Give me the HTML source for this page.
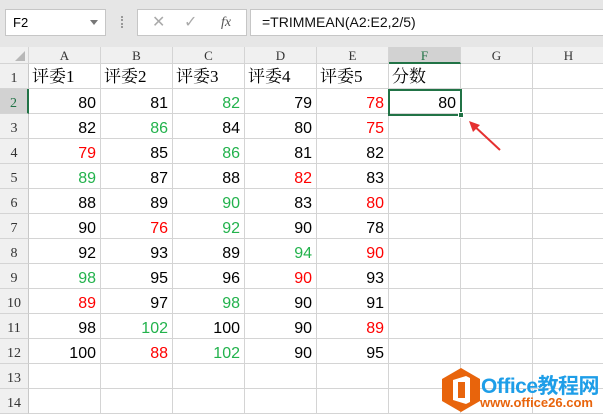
<!DOCTYPE html>
<html><head><meta charset="utf-8"><style>
*{box-sizing:border-box;margin:0;padding:0}
body{width:603px;height:416px;overflow:hidden;background:#fff;font-family:"Liberation Sans",sans-serif;position:relative}
.tb{position:absolute;left:0;top:0;width:603px;height:47px;background:#e6e6e6}
.box{position:absolute;top:9px;height:27px;background:#fff;border:1px solid #c6c6c6}
.hdr{position:absolute;left:0;top:47px;width:603px;height:17px;background:#f0f0f0;border-bottom:1px solid #d4d4d4}
.ch{position:absolute;top:47px;height:17px;border-right:1px solid #d4d4d4;font:13px "Liberation Serif",serif;text-align:center;line-height:17px;color:#333}
.row{position:absolute;left:0;width:610px;height:25px;display:flex}
.rh{width:29px;height:25px;flex:none;background:#f0f0f0;border-bottom:1px solid #d4d4d4;border-right:1px solid #c8c8c8;font:14px "Liberation Serif",serif;text-align:center;line-height:30px;color:#333}
.row span{width:72px;flex:none;height:25px;border-right:1px solid #d4d4d4;border-bottom:1px solid #d4d4d4;font-size:16px;text-align:right;padding-right:4px;line-height:30px;color:#000}
.t span{text-align:left;padding-left:3px;font-family:"Liberation Serif","Noto Serif CJK SC",serif;font-size:17px;line-height:25px}
.row span.g{color:#22b24c}.row span.r{color:#ff0000}
.sel{background:#d2d2d2!important;color:#217346!important;border-right:2px solid #217346!important}
</style></head><body>
<div class="tb">
 <div class="box" style="left:5px;width:101px;font-size:13px;line-height:25px;padding-left:7px">F2<span style="position:absolute;right:7px;top:10px;border:4px solid transparent;border-top:5px solid #777"></span></div>
 <div style="position:absolute;left:121px;top:16px;width:2px;height:12px;border-left:2px dotted #999"></div>
 <div class="box" style="left:137px;width:110px;color:#aaa;font-size:16px;line-height:25px"><span style="position:absolute;left:14px;top:0">✕</span><span style="position:absolute;left:46px;top:0">✓</span><span style="position:absolute;left:83px;top:0;line-height:25px;color:#555;font:italic 14px/25px 'Liberation Serif',serif">fx</span></div>
 <div class="box" style="left:250px;width:360px;font-size:14px;line-height:25px;padding-left:11px;color:#111">=TRIMMEAN(A2:E2,2/5)</div>
</div>
<div class="hdr"></div>
<div style="position:absolute;left:0;top:47px;width:29px;height:17px;border-right:1px solid #d4d4d4"><span style="position:absolute;right:3px;bottom:3px;border-left:10px solid transparent;border-bottom:10px solid #b8b8b8"></span></div>
<div class="ch" style="left:29px;width:72px">A</div>
<div class="ch" style="left:101px;width:72px">B</div>
<div class="ch" style="left:173px;width:72px">C</div>
<div class="ch" style="left:245px;width:72px">D</div>
<div class="ch" style="left:317px;width:72px">E</div>
<div class="ch" style="left:389px;width:72px;background:#d2d2d2;border-bottom:2px solid #217346;color:#217346">F</div>
<div class="ch" style="left:461px;width:72px">G</div>
<div class="ch" style="left:533px;width:72px">H</div>

<div class="row t" style="top:64px"><div class="rh">1</div><span>评委1</span><span>评委2</span><span>评委3</span><span>评委4</span><span>评委5</span><span>分数</span><span></span><span></span></div>
<div class="row" style="top:89px"><div class="rh sel">2</div><span>80</span><span>81</span><span class="g">82</span><span>79</span><span class="r">78</span><span>80</span><span></span><span></span></div>
<div class="row" style="top:114px"><div class="rh">3</div><span>82</span><span class="g">86</span><span>84</span><span>80</span><span class="r">75</span><span></span><span></span><span></span></div>
<div class="row" style="top:139px"><div class="rh">4</div><span class="r">79</span><span>85</span><span class="g">86</span><span>81</span><span>82</span><span></span><span></span><span></span></div>
<div class="row" style="top:164px"><div class="rh">5</div><span class="g">89</span><span>87</span><span>88</span><span class="r">82</span><span>83</span><span></span><span></span><span></span></div>
<div class="row" style="top:189px"><div class="rh">6</div><span>88</span><span>89</span><span class="g">90</span><span>83</span><span class="r">80</span><span></span><span></span><span></span></div>
<div class="row" style="top:214px"><div class="rh">7</div><span>90</span><span class="r">76</span><span class="g">92</span><span>90</span><span>78</span><span></span><span></span><span></span></div>
<div class="row" style="top:239px"><div class="rh">8</div><span>92</span><span>93</span><span>89</span><span class="g">94</span><span class="r">90</span><span></span><span></span><span></span></div>
<div class="row" style="top:264px"><div class="rh">9</div><span class="g">98</span><span>95</span><span>96</span><span class="r">90</span><span>93</span><span></span><span></span><span></span></div>
<div class="row" style="top:289px"><div class="rh">10</div><span class="r">89</span><span>97</span><span class="g">98</span><span>90</span><span>91</span><span></span><span></span><span></span></div>
<div class="row" style="top:314px"><div class="rh">11</div><span>98</span><span class="g">102</span><span>100</span><span>90</span><span class="r">89</span><span></span><span></span><span></span></div>
<div class="row" style="top:339px"><div class="rh">12</div><span>100</span><span class="r">88</span><span class="g">102</span><span>90</span><span>95</span><span></span><span></span><span></span></div>
<div class="row" style="top:364px"><div class="rh">13</div><span></span><span></span><span></span><span></span><span></span><span></span><span></span><span></span></div>
<div class="row" style="top:389px"><div class="rh">14</div><span></span><span></span><span></span><span></span><span></span><span></span><span></span><span></span></div>

<div style="position:absolute;left:388px;top:89px;width:74px;height:27px;border:2px solid #217346"></div>
<div style="position:absolute;left:458px;top:112px;width:6px;height:6px;background:#217346;border:1px solid #fff"></div>
<svg style="position:absolute;left:466px;top:118px" width="40" height="36"><line x1="34" y1="32" x2="5" y2="5" stroke="#e53030" stroke-width="2"/><path d="M3 3 L14 7 L7 14 Z" fill="#e53030"/></svg>
<svg style="position:absolute;left:440px;top:367px" width="42" height="46"><polygon points="21,1 40,12 40,34 21,45 2,34 2,12" fill="#e8640c"/><path d="M13 13 L26 9 L30 11 L30 35 L26 37 L13 33 Z" fill="#fff"/><rect x="18" y="15" width="7" height="16" fill="#e8640c"/></svg>
<div style="position:absolute;left:481px;top:370px;color:#1e9ee8;font:bold 21px 'Liberation Sans','Noto Sans CJK SC',sans-serif;letter-spacing:-0.5px">Office教程网</div>
<div style="position:absolute;left:480px;top:395px;color:#e8640c;font:bold 13px 'Liberation Sans',sans-serif">www.office26.com</div>
</body></html>
